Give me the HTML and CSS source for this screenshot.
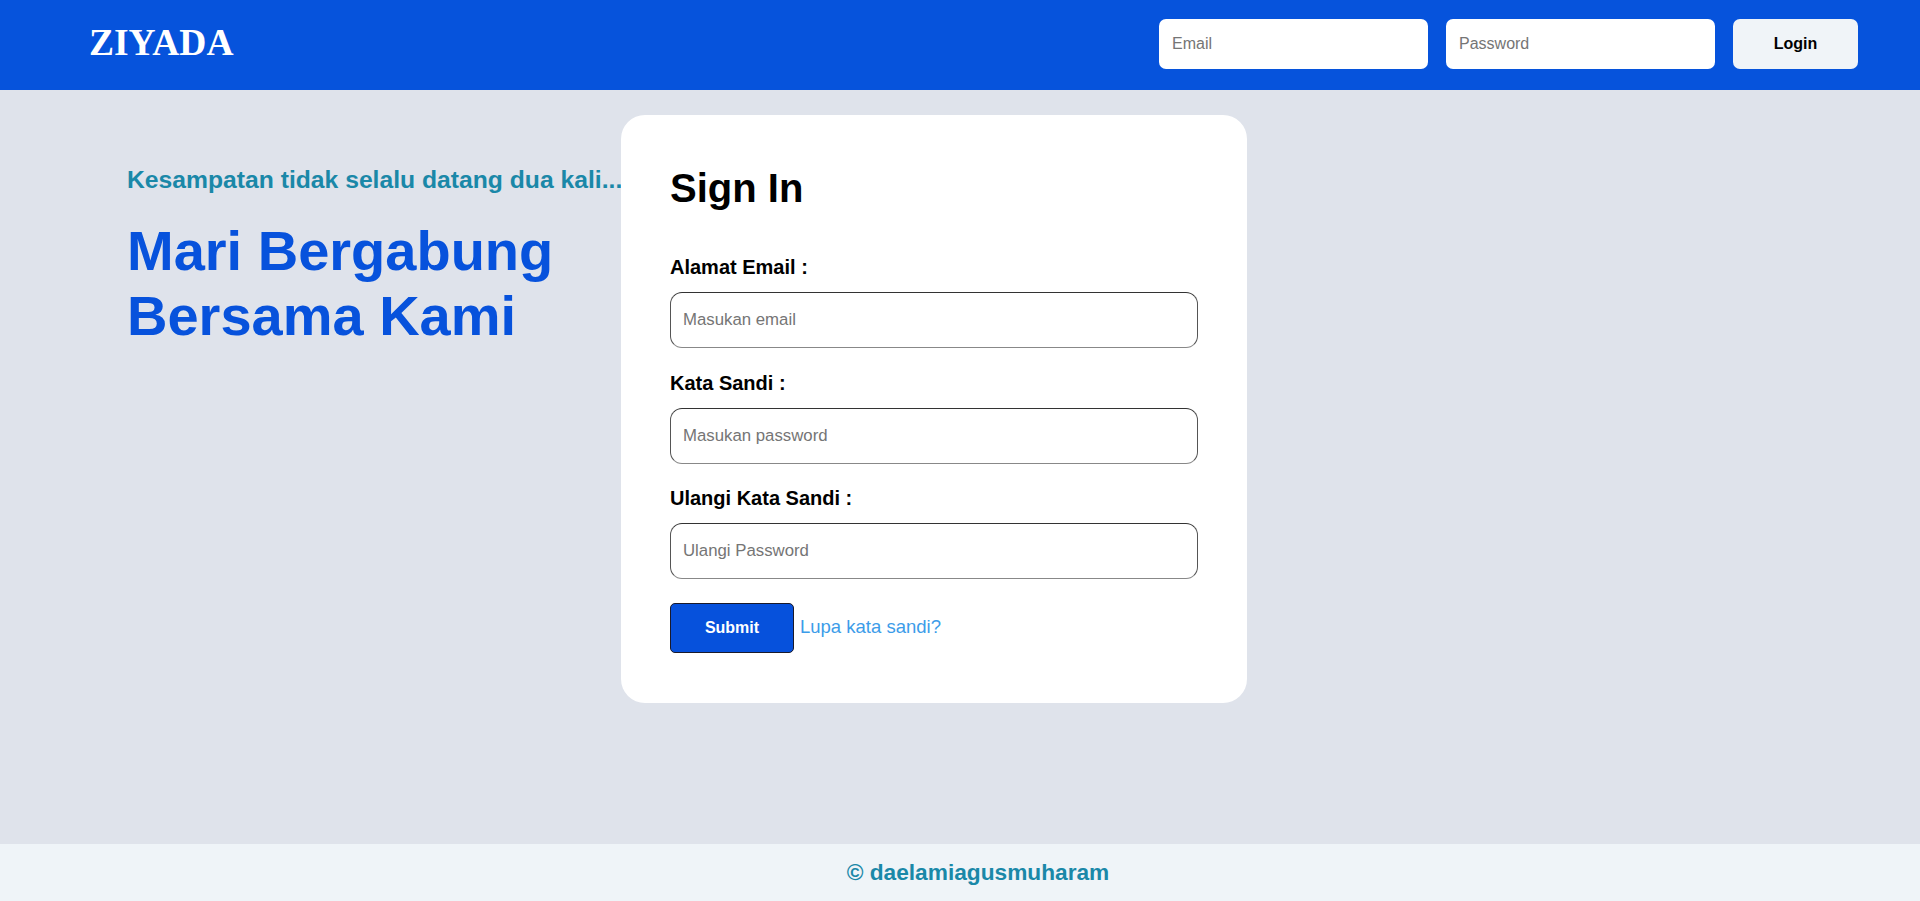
FILE: index.html
```html
<!DOCTYPE html>
<html lang="id">
<head>
<meta charset="utf-8">
<title>Ziyada - Sign In</title>
<link rel="stylesheet" href="styles.css">
</head>
<body>
<header class="topbar">
  <div class="logo">ZIYADA</div>
  <form class="quick-login">
    <input class="quick-input" type="email" placeholder="Email">
    <input class="quick-input" type="password" placeholder="Password">
    <button class="quick-btn" type="button">Login</button>
  </form>
</header>
<main class="main">
  <section class="intro">
    <p class="tagline">Kesampatan tidak selalu datang dua kali...</p>
    <h2 class="headline">Mari Bergabung<br>Bersama Kami</h2>
  </section>
  <section class="card">
    <h1 class="card-title">Sign In</h1>
    <form class="signin">
      <label class="field-label">Alamat Email :</label>
      <input class="field-input" type="email" placeholder="Masukan email">
      <label class="field-label">Kata Sandi :</label>
      <input class="field-input" type="password" placeholder="Masukan password">
      <label class="field-label">Ulangi Kata Sandi :</label>
      <input class="field-input" type="password" placeholder="Ulangi Password">
      <div class="actions">
        <button class="submit-btn" type="button">Submit</button>
        <a class="forgot" href="#">Lupa kata sandi?</a>
      </div>
    </form>
  </section>
</main>
<footer class="footer">© daelamiagusmuharam</footer>
</body>
</html>
```
FILE: styles.css
```css
* { box-sizing: border-box; }
html, body { margin: 0; padding: 0; }
body {
  font-family: "Liberation Sans", Arial, sans-serif;
  background: #dfe3eb;
  min-height: 100vh;
  display: flex;
  flex-direction: column;
}
.topbar {
  height: 90px;
  background: #0653dc;
  display: flex;
  align-items: center;
  justify-content: space-between;
  padding: 0 62px 0 89px;
}
.logo {
  font-family: "Liberation Serif", "Times New Roman", serif;
  font-weight: bold;
  font-size: 37.5px;
  line-height: 42px;
  margin-bottom: 4px;
  color: #ffffff;
}
.quick-login {
  display: flex;
  gap: 18px;
  align-items: center;
  margin-bottom: 2px;
}
.quick-input {
  width: 269px;
  height: 50px;
  border: none;
  border-radius: 7px;
  background: #ffffff;
  padding: 0 13px;
  font-family: "Liberation Sans", Arial, sans-serif;
  font-size: 16px;
  color: #222;
  outline: none;
}
.quick-input::placeholder { color: #757575; }
.quick-btn {
  width: 125px;
  height: 50px;
  border: none;
  border-radius: 7px;
  background: #f0f4f8;
  font-family: "Liberation Sans", Arial, sans-serif;
  font-weight: bold;
  font-size: 16px;
  color: #000;
}
.main {
  flex: 1;
  display: flex;
  align-items: flex-start;
  padding: 25px 0 0 127px;
}
.intro {
  width: 494px;
  flex: none;
  padding-top: 51px;
}
.tagline {
  margin: 0 0 23.5px;
  white-space: nowrap;
  font-size: 24.7px;
  line-height: 28px;
  font-weight: bold;
  color: #1a88a8;
}
.headline {
  margin: 0;
  font-size: 56px;
  line-height: 65px;
  font-weight: bold;
  color: #0752dc;
  white-space: nowrap;
}
.card {
  position: relative;
  width: 626px;
  flex: none;
  background: #ffffff;
  border-radius: 24px;
  padding: 49.5px 49px 50px;
}
.card-title {
  margin: 0 0 45.5px;
  font-size: 40px;
  line-height: 46px;
  font-weight: bold;
  color: #000;
}
.signin {
  display: flex;
  flex-direction: column;
}
.field-label {
  font-size: 20px;
  line-height: 23px;
  font-weight: bold;
  color: #000;
  margin-bottom: 13px;
}
.field-input {
  width: 100%;
  height: 56px;
  border: 1px solid #555;
  border-top-color: #333;
  border-bottom-color: #888;
  border-radius: 12px;
  padding: 0 12px;
  margin-bottom: 23.5px;
  font-family: "Liberation Sans", Arial, sans-serif;
  font-size: 16.8px;
  color: #222;
  background: #fff;
  outline: none;
}
.field-input::placeholder { color: #757575; }
.actions {
  display: flex;
  align-items: baseline;
  gap: 6px;
  margin-top: 0.5px;
}
.submit-btn {
  width: 124px;
  height: 50px;
  background: #0651dc;
  border: 1px solid #1a1a2a;
  border-radius: 5px;
  color: #ffffff;
  font-family: "Liberation Sans", Arial, sans-serif;
  font-weight: bold;
  font-size: 16px;
}
.forgot {
  font-size: 18.5px;
  color: #3c9ce9;
  text-decoration: none;
}
.footer {
  height: 57px;
  background: #eff4f8;
  display: flex;
  align-items: center;
  justify-content: center;
  padding-left: 36px;
  font-size: 22.7px;
  font-weight: bold;
  color: #1a88a8;
}
```
